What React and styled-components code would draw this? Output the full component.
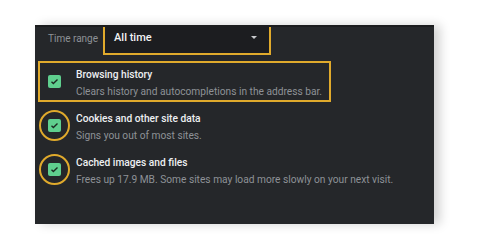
import React from "react";
import styled, { createGlobalStyle } from "styled-components";

const Global = createGlobalStyle`
  html, body {
    margin: 0;
    padding: 0;
    background: #ffffff;
    font-family: Roboto, "Liberation Sans", sans-serif;
  }
`;

const Stage = styled.div`
  width: 500px;
  height: 250px;
  padding: 25px 0 0 35px;
  box-sizing: border-box;
`;

const Panel = styled.div`
  width: 399px;
  height: 199px;
  background: #25272a;
  border-top: 2px solid #1c1d1f;
  box-sizing: border-box;
  box-shadow: 6px 0 10px rgba(0, 0, 0, 0.18);
  display: flex;
  flex-direction: column;
`;

const TimeRow = styled.div`
  display: flex;
  align-items: stretch;
  height: 28px;
  padding-left: 13px;
  gap: 5px;
`;

const Label = styled.span`
  color: #8e9297;
  font-size: 10px;
  align-self: center;
  margin-top: -5px;
  white-space: nowrap;
`;

const Select = styled.div`
  width: 168px;
  box-sizing: border-box;
  border: 2px solid #e0aa2c;
  border-top: none;
  background: #1c1d20;
  display: flex;
  align-items: center;
  justify-content: space-between;
  padding: 0 12px 5px 9px;
  color: #f1f3f4;
  font-size: 11px;
  font-weight: 500;
`;

const Caret = styled.span`
  width: 0;
  height: 0;
  border-left: 3.5px solid transparent;
  border-right: 3.5px solid transparent;
  border-top: 3.5px solid #c8cacd;
`;

const List = styled.div`
  display: flex;
  flex-direction: column;
  margin-top: 6px;
  gap: 3px;
`;

const Option = styled.div`
  display: flex;
  align-items: center;
  margin-left: 3px;
  width: ${(p) => (p.$boxed ? "293px" : "auto")};
  height: 41px;
  box-sizing: border-box;
  border: 2px solid ${(p) => (p.$boxed ? "#e0aa2c" : "transparent")};
  padding-left: 8px;
`;

const Check = styled.span`
  position: relative;
  flex: none;
  width: 13px;
  height: 13px;
  border-radius: 2px;
  background: #5fcf8e;
  display: flex;
  align-items: center;
  justify-content: center;

  &::after {
    content: "";
    position: absolute;
    left: -9px;
    top: -9px;
    width: 27px;
    height: 27px;
    border-radius: 50%;
    border: 2px solid #e0aa2c;
    display: ${(p) => (p.$ring ? "block" : "none")};
  }
`;

const Texts = styled.div`
  display: flex;
  flex-direction: column;
  margin: 3px 0 0 15px;
  gap: 5px;
  white-space: nowrap;
  line-height: 12px;
`;

const Title = styled.span`
  color: #eef0f2;
  font-size: 10.2px;
  font-weight: 500;
`;

const Sub = styled.span`
  color: #8e9297;
  font-size: 10.2px;
`;

function Tick() {
  return (
    <svg width="9" height="9" viewBox="0 0 24 24">
      <path d="M4 12.5l5 5L20 6.5" fill="none" stroke="#1c2a22" strokeWidth="3.6" />
    </svg>
  );
}

const options = [
  { title: "Browsing history", sub: "Clears history and autocompletions in the address bar.", boxed: true },
  { title: "Cookies and other site data", sub: "Signs you out of most sites.", ring: true },
  { title: "Cached images and files", sub: "Frees up 17.9 MB. Some sites may load more slowly on your next visit.", ring: true },
];

export default function App() {
  return (
    <Stage>
      <Global />
      <Panel>
        <TimeRow>
          <Label>Time range</Label>
          <Select>
            All time
            <Caret />
          </Select>
        </TimeRow>
        <List>
          {options.map((o) => (
            <Option key={o.title} $boxed={o.boxed}>
              <Check $ring={o.ring}>
                <Tick />
              </Check>
              <Texts>
                <Title>{o.title}</Title>
                <Sub>{o.sub}</Sub>
              </Texts>
            </Option>
          ))}
        </List>
      </Panel>
    </Stage>
  );
}
